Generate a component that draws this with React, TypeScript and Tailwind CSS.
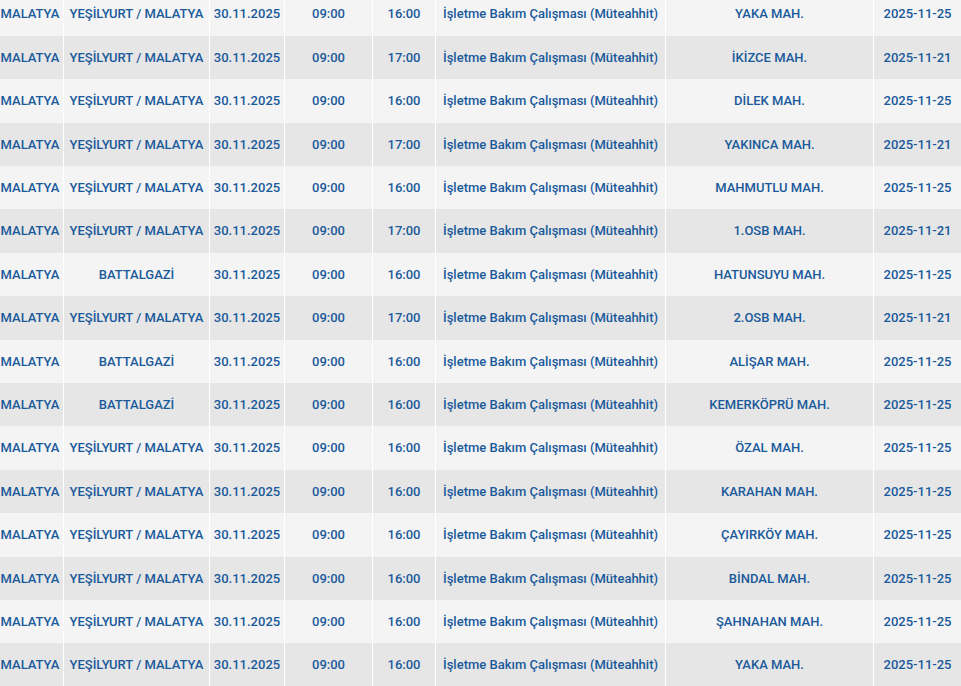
import React from "react";

type Row = [string, string, string, string, string, string, string, string];

const rows: Row[] = [
  ["MALATYA", "YEŞİLYURT / MALATYA", "30.11.2025", "09:00", "16:00", "İşletme Bakım Çalışması (Müteahhit)", "YAKA MAH.", "2025-11-25"],
  ["MALATYA", "YEŞİLYURT / MALATYA", "30.11.2025", "09:00", "17:00", "İşletme Bakım Çalışması (Müteahhit)", "İKİZCE MAH.", "2025-11-21"],
  ["MALATYA", "YEŞİLYURT / MALATYA", "30.11.2025", "09:00", "16:00", "İşletme Bakım Çalışması (Müteahhit)", "DİLEK MAH.", "2025-11-25"],
  ["MALATYA", "YEŞİLYURT / MALATYA", "30.11.2025", "09:00", "17:00", "İşletme Bakım Çalışması (Müteahhit)", "YAKINCA MAH.", "2025-11-21"],
  ["MALATYA", "YEŞİLYURT / MALATYA", "30.11.2025", "09:00", "16:00", "İşletme Bakım Çalışması (Müteahhit)", "MAHMUTLU MAH.", "2025-11-25"],
  ["MALATYA", "YEŞİLYURT / MALATYA", "30.11.2025", "09:00", "17:00", "İşletme Bakım Çalışması (Müteahhit)", "1.OSB MAH.", "2025-11-21"],
  ["MALATYA", "BATTALGAZİ", "30.11.2025", "09:00", "16:00", "İşletme Bakım Çalışması (Müteahhit)", "HATUNSUYU MAH.", "2025-11-25"],
  ["MALATYA", "YEŞİLYURT / MALATYA", "30.11.2025", "09:00", "17:00", "İşletme Bakım Çalışması (Müteahhit)", "2.OSB MAH.", "2025-11-21"],
  ["MALATYA", "BATTALGAZİ", "30.11.2025", "09:00", "16:00", "İşletme Bakım Çalışması (Müteahhit)", "ALİŞAR MAH.", "2025-11-25"],
  ["MALATYA", "BATTALGAZİ", "30.11.2025", "09:00", "16:00", "İşletme Bakım Çalışması (Müteahhit)", "KEMERKÖPRÜ MAH.", "2025-11-25"],
  ["MALATYA", "YEŞİLYURT / MALATYA", "30.11.2025", "09:00", "16:00", "İşletme Bakım Çalışması (Müteahhit)", "ÖZAL MAH.", "2025-11-25"],
  ["MALATYA", "YEŞİLYURT / MALATYA", "30.11.2025", "09:00", "16:00", "İşletme Bakım Çalışması (Müteahhit)", "KARAHAN MAH.", "2025-11-25"],
  ["MALATYA", "YEŞİLYURT / MALATYA", "30.11.2025", "09:00", "16:00", "İşletme Bakım Çalışması (Müteahhit)", "ÇAYIRKÖY MAH.", "2025-11-25"],
  ["MALATYA", "YEŞİLYURT / MALATYA", "30.11.2025", "09:00", "16:00", "İşletme Bakım Çalışması (Müteahhit)", "BİNDAL MAH.", "2025-11-25"],
  ["MALATYA", "YEŞİLYURT / MALATYA", "30.11.2025", "09:00", "16:00", "İşletme Bakım Çalışması (Müteahhit)", "ŞAHNAHAN MAH.", "2025-11-25"],
  ["MALATYA", "YEŞİLYURT / MALATYA", "30.11.2025", "09:00", "16:00", "İşletme Bakım Çalışması (Müteahhit)", "YAKA MAH.", "2025-11-25"],
];

// column widths incl. the 1px white divider (first column is cut off on the left)
const cols = [
  "w-[67px] justify-center",
  "w-[146px] justify-center",
  "w-[75px] justify-center",
  "w-[88px] justify-center",
  "w-[63px] justify-center",
  "w-[230px] justify-start pl-[7px]",
  "w-[208px] justify-center",
  "w-[87px] justify-center",
];

function App() {
  return (
    <div className="w-[961px] h-[686px] overflow-hidden bg-white font-['Roboto',sans-serif]">
      <div className="-mt-[7.5px] -ml-[3px] flex flex-col">
        {rows.map((row, i) => (
          <div
            key={i}
            className={
              "flex h-[43.4px] shrink-0 " + (i % 2 === 0 ? "bg-[#f4f4f4]" : "bg-[#e6e6e6]")
            }
          >
            {row.map((cell, j) => (
              <div
                key={j}
                className={
                  "flex items-center shrink-0 whitespace-nowrap text-[13px] font-medium text-[#1a5a9b] " +
                  cols[j] +
                  (j < 7 ? " border-r border-white" : "")
                }
              >
                {cell}
              </div>
            ))}
          </div>
        ))}
      </div>
    </div>
  );
}

export default App;
